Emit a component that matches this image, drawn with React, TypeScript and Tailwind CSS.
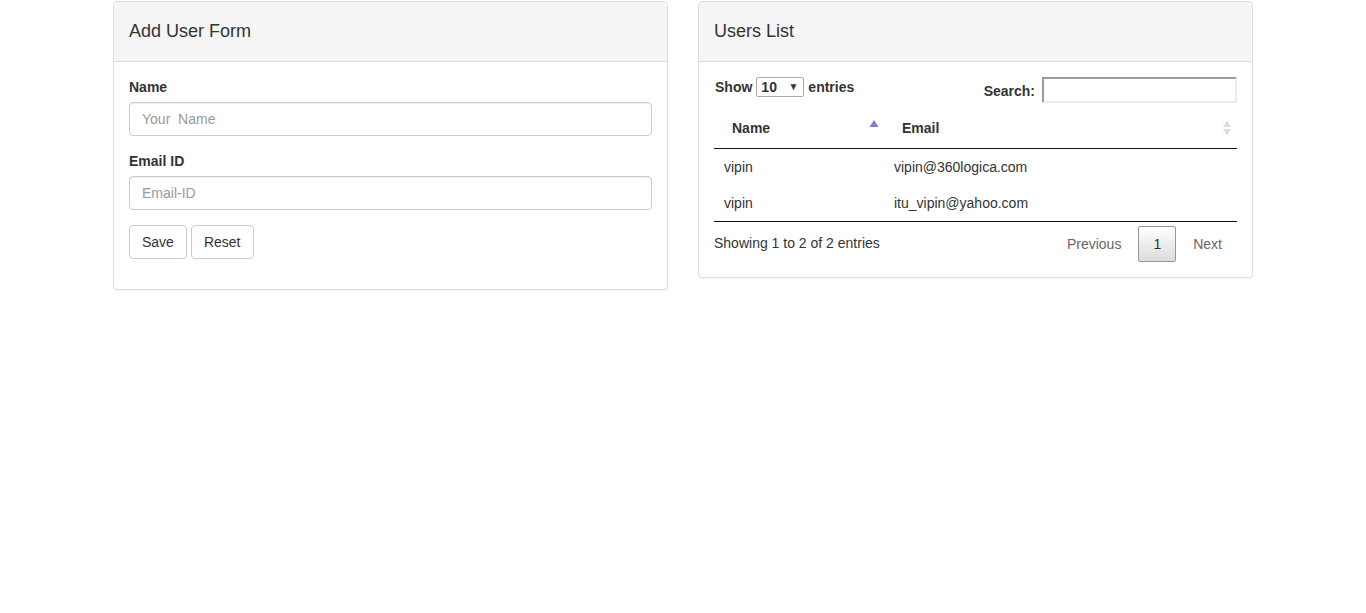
import React from "react";

function SortAsc() {
  return (
    <svg width="10" height="19" viewBox="0 0 10 19" className="absolute right-[5px] top-1/2 -translate-y-1/2">
      <path d="M5 1.5 L9.5 8.5 L0.5 8.5 Z" fill="#7b7dd6" />
    </svg>
  );
}

function SortBoth() {
  return (
    <svg width="10" height="19" viewBox="0 0 10 19" className="absolute right-[5px] top-1/2 -translate-y-1/2">
      <path d="M5 2 L9 8.5 L1 8.5 Z" fill="#dcdcdc" />
      <path d="M5 17 L9 10.5 L1 10.5 Z" fill="#dcdcdc" />
    </svg>
  );
}

export default function App() {
  return (
    <div
      className="min-h-screen bg-white text-[14px] leading-[20px] text-[#333]"
      style={{ fontFamily: '"Liberation Sans", Arial, Helvetica, sans-serif' }}
    >
      <div className="mx-auto w-[1170px] px-[15px] pt-px">
        <div className="flex gap-[30px] items-start">
          {/* Add User Form */}
          <div className="w-[555px] rounded-[4px] border border-[#ddd] bg-white shadow-[0_1px_1px_rgba(0,0,0,0.05)]">
            <div className="h-[60px] flex items-center px-[15px] pb-[2px] bg-[#f5f5f5] border-b border-[#ddd] rounded-t-[3px]">
              <h3 className="text-[18px] text-[#333]">Add User Form</h3>
            </div>
            <div className="p-[15px]">
              <div className="mb-[15px]">
                <label className="block font-bold mb-[5px]">Name</label>
                <input
                  className="block w-full h-[34px] px-[12px] py-[6px] border border-[#ccc] rounded-[4px] shadow-[inset_0_1px_1px_rgba(0,0,0,0.075)] text-[14px] placeholder:text-[#999] outline-none"
                  placeholder={"Your\u00A0 Name"}
                />
              </div>
              <div className="mb-[15px]">
                <label className="block font-bold mb-[5px]">Email ID</label>
                <input
                  className="block w-full h-[34px] px-[12px] py-[6px] border border-[#ccc] rounded-[4px] shadow-[inset_0_1px_1px_rgba(0,0,0,0.075)] text-[14px] placeholder:text-[#999] outline-none"
                  placeholder="Email-ID"
                />
              </div>
              <div className="mb-[15px] flex gap-[4px]">
                <button className="h-[34px] px-[12px] border border-[#ccc] rounded-[4px] bg-white text-[#333]">Save</button>
                <button className="h-[34px] px-[12px] border border-[#ccc] rounded-[4px] bg-white text-[#333]">Reset</button>
              </div>
            </div>
          </div>

          {/* Users List */}
          <div className="w-[555px] rounded-[4px] border border-[#ddd] bg-white shadow-[0_1px_1px_rgba(0,0,0,0.05)]">
            <div className="h-[60px] flex items-center px-[15px] pb-[2px] bg-[#f5f5f5] border-b border-[#ddd] rounded-t-[3px]">
              <h3 className="text-[18px] text-[#333]">Users List</h3>
            </div>
            <div className="p-[15px]">
              <div className="flex justify-between items-start">
                <div className="flex items-center h-[20px] font-bold pl-px">
                  <span>Show</span>
                  <div className="mx-[4px] w-[48px] h-[20px] border border-[#a9a9a9] rounded-[2px] flex items-center justify-between pl-[4px] pr-[5px] font-bold text-[14px] leading-none">
                    <span>10</span>
                    <span className="text-[10px] text-[#333]">▼</span>
                  </div>
                  <span>entries</span>
                </div>
                <div className="flex items-center font-bold">
                  <span className="mt-[1px]">Search:</span>
                  <input className="ml-[7px] w-[195px] h-[26px] border-2 border-t-[#9a9a9a] border-l-[#9a9a9a] border-b-[#ebebeb] border-r-[#ebebeb] outline-none" />
                </div>
              </div>
              <table className="w-full mt-[5px] border-collapse">
                <thead>
                  <tr>
                    <th className="relative w-[170px] text-left font-bold px-[18px] py-[10px] border-b border-[#111]">
                      Name
                      <SortAsc />
                    </th>
                    <th className="relative text-left font-bold px-[18px] py-[10px] border-b border-[#111]">
                      Email
                      <SortBoth />
                    </th>
                  </tr>
                </thead>
                <tbody>
                  <tr>
                    <td className="px-[10px] py-[8px]">vipin</td>
                    <td className="px-[10px] py-[8px]">vipin@360logica.com</td>
                  </tr>
                  <tr>
                    <td className="px-[10px] py-[8px] border-b border-[#111]">vipin</td>
                    <td className="px-[10px] py-[8px] border-b border-[#111]">itu_vipin@yahoo.com</td>
                  </tr>
                </tbody>
              </table>
              <div className="flex justify-between items-start">
                <div className="pt-[11px]">Showing 1 to 2 of 2 entries</div>
                <div className="pt-[4px] flex gap-[2px]">
                  <span className="px-[14px] py-[7px] border border-transparent text-[#666]">Previous</span>
                  <span className="px-[14px] py-[7px] border border-[#979797] rounded-[2px] bg-gradient-to-b from-white to-[#dcdcdc] text-[#333]">1</span>
                  <span className="px-[14px] py-[7px] border border-transparent text-[#666]">Next</span>
                </div>
              </div>
            </div>
          </div>
        </div>
      </div>
    </div>
  );
}
